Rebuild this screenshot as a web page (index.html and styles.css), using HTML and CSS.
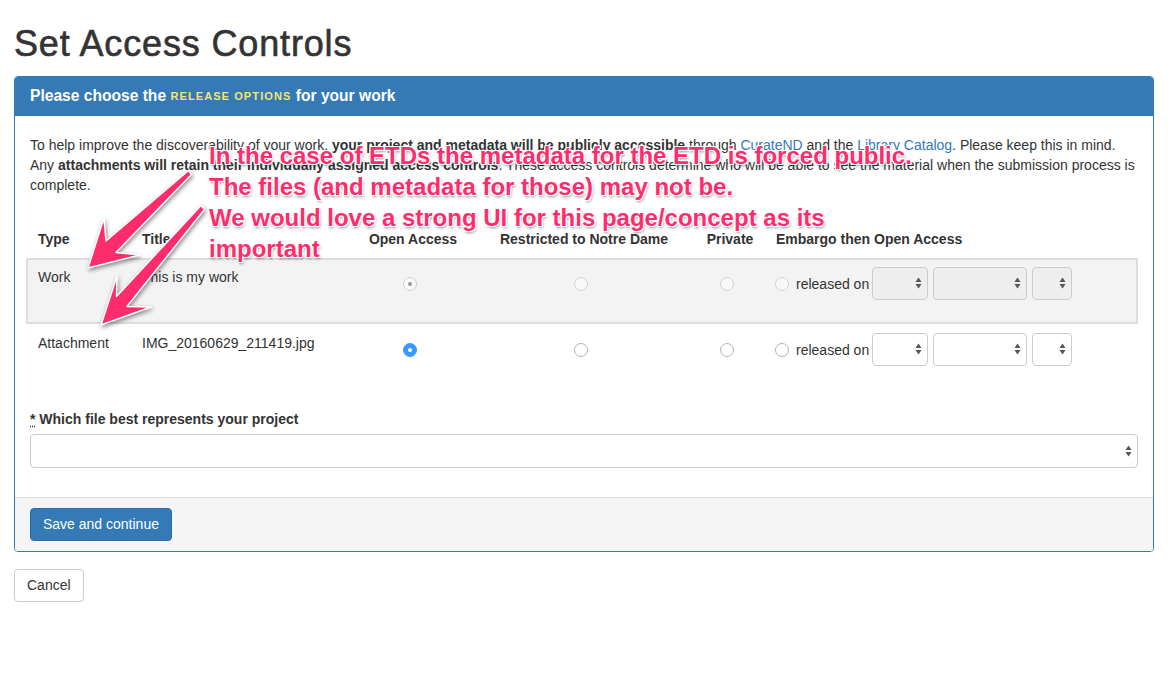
FILE: index.html
```html
<!DOCTYPE html>
<html>
<head>
<meta charset="utf-8">
<title>Set Access Controls</title>
<link rel="stylesheet" href="styles.css">
</head>
<body>
<h1 class="page-title">Set Access Controls</h1>
<div class="panel">
  <div class="panel-heading">Please choose the&nbsp;<span class="release">release options</span>&nbsp;for your work</div>
  <div class="panel-body">
    <p class="intro">To help improve the discoverability of your work, <strong>your project and metadata will be publicly accessible</strong> through <a class="link">CurateND</a> and the <a class="link">Library Catalog</a>. Please keep this in mind. Any <strong>attachments will retain their individually assigned access controls</strong>. These access controls determine who will be able to see the material when the submission process is complete.</p>
    <table class="access">
      <colgroup>
        <col class="w-type"><col class="w-title"><col class="w-open"><col class="w-nd"><col class="w-priv"><col>
      </colgroup>
      <thead>
        <tr>
          <th>Type</th>
          <th>Title</th>
          <th class="c">Open Access</th>
          <th class="c">Restricted to Notre Dame</th>
          <th class="c">Private</th>
          <th>Embargo then Open Access</th>
        </tr>
      </thead>
      <tbody>
        <tr class="work">
          <td>Work</td>
          <td>This is my work</td>
          <td><div class="rbox"><span class="radio disabled checked"></span></div></td>
          <td><div class="rbox"><span class="radio disabled"></span></div></td>
          <td><div class="rbox"><span class="radio disabled"></span></div></td>
          <td class="emb-cell">
            <div class="embargo">
              <span class="radio disabled"></span>
              <span class="rel">released on</span>
              <div class="sel s1 disabled"><svg class="updown" width="7" height="12" viewBox="0 0 7 12"><polygon points="0.5,5 3.5,0.5 6.5,5"/><polygon points="0.5,7 3.5,11.5 6.5,7"/></svg></div>
              <div class="sel s2 disabled"><svg class="updown" width="7" height="12" viewBox="0 0 7 12"><polygon points="0.5,5 3.5,0.5 6.5,5"/><polygon points="0.5,7 3.5,11.5 6.5,7"/></svg></div>
              <div class="sel s3 disabled"><svg class="updown" width="7" height="12" viewBox="0 0 7 12"><polygon points="0.5,5 3.5,0.5 6.5,5"/><polygon points="0.5,7 3.5,11.5 6.5,7"/></svg></div>
            </div>
          </td>
        </tr>
        <tr>
          <td>Attachment</td>
          <td>IMG_20160629_211419.jpg</td>
          <td><div class="rbox"><span class="radio checked"></span></div></td>
          <td><div class="rbox"><span class="radio"></span></div></td>
          <td><div class="rbox"><span class="radio"></span></div></td>
          <td class="emb-cell">
            <div class="embargo">
              <span class="radio"></span>
              <span class="rel">released on</span>
              <div class="sel s1"><svg class="updown" width="7" height="12" viewBox="0 0 7 12"><polygon points="0.5,5 3.5,0.5 6.5,5"/><polygon points="0.5,7 3.5,11.5 6.5,7"/></svg></div>
              <div class="sel s2"><svg class="updown" width="7" height="12" viewBox="0 0 7 12"><polygon points="0.5,5 3.5,0.5 6.5,5"/><polygon points="0.5,7 3.5,11.5 6.5,7"/></svg></div>
              <div class="sel s3"><svg class="updown" width="7" height="12" viewBox="0 0 7 12"><polygon points="0.5,5 3.5,0.5 6.5,5"/><polygon points="0.5,7 3.5,11.5 6.5,7"/></svg></div>
            </div>
          </td>
        </tr>
      </tbody>
    </table>
    <label class="file-label"><abbr class="req" title="required">*</abbr> Which file best represents your project</label>
    <div class="sel full"><svg class="updown" width="7" height="12" viewBox="0 0 7 12"><polygon points="0.5,5 3.5,0.5 6.5,5"/><polygon points="0.5,7 3.5,11.5 6.5,7"/></svg></div>
  </div>
  <div class="panel-footer">
    <span class="btn btn-primary">Save and continue</span>
  </div>
</div>
<span class="btn btn-default">Cancel</span>

<svg class="arrows" width="1170" height="678" viewBox="0 0 1170 678">
  <polygon points="88,268 104,218 106,241 188.5,170.5 191.5,174.5 116,252.5 140,255"/>
  <polygon points="101,325 117,276 116.5,296.5 201,205.5 204.5,209.5 127,306.5 151,307"/>
</svg>
<div class="note">In the case of ETDs the metadata for the ETD is forced public.<br>The files (and metadata for those) may not be.<br>We would love a strong UI for this page/concept as its<br>important</div>
</body>
</html>
```
FILE: styles.css
```css
* { box-sizing: border-box; }
html, body { margin: 0; }
body {
  font-family: "Liberation Sans", Arial, sans-serif;
  font-size: 14px;
  line-height: 20px;
  color: #333;
  background: #fff;
  padding: 0 14px;
  position: relative;
  min-height: 678px;
}
.page-title {
  font-size: 36px;
  line-height: 39.6px;
  font-weight: normal;
  letter-spacing: 0.85px;
  -webkit-text-stroke: 0.6px #333;
  margin: 24px 0 12px;
}
.panel {
  width: 1140px;
  border: 1px solid #337ab7;
  border-radius: 4px;
  margin-bottom: 17px;
}
.panel-heading {
  background: #337ab7;
  color: #fff;
  height: 39px;
  padding: 0 15px;
  display: flex;
  align-items: center;
  font-weight: bold;
  font-size: 15.6px;
  border-radius: 3px 3px 0 0;
}
.release {
  text-transform: uppercase;
  font-size: 11px;
  letter-spacing: 1.1px;
  color: #f3e56f;
}
.panel-body { padding: 19px 15px 15px; }
.intro { margin: 0 0 26px; }
.link { color: #337ab7; text-decoration: none; }

.access {
  border-collapse: separate;
  border-spacing: 0;
  table-layout: fixed;
  width: calc(100% + 4px);
  margin: 0 0 22px -4px;
}
.w-type { width: 108px; }
.w-title { width: 216px; }
.w-open { width: 126px; }
.w-nd { width: 216px; }
.w-priv { width: 76px; }
.access th {
  text-align: left;
  font-weight: bold;
  padding: 8px 8px 9px;
  white-space: nowrap;
}
.access th.c { text-align: center; }
.access td {
  padding: 9px 8px 21px;
  vertical-align: top;
}
.access th:first-child, .access td:first-child { padding-left: 12px; }
.access tr.work td {
  background: #f3f3f3;
  border-top: 2px solid #ddd;
  border-bottom: 2px solid #ddd;
  padding-top: 7px;
  padding-bottom: 22px;
}
.access tr.work td:first-child { border-left: 2px solid #ddd; padding-left: 10px; }
.access tr.work td:last-child { border-right: 2px solid #ddd; }
.access td.emb-cell { padding-left: 7px; padding-right: 0; }

.rbox {
  height: 33px;
  display: flex;
  align-items: center;
  justify-content: center;
}
.rbox .radio { margin-right: 6px; margin-top: 2px; }
.radio {
  width: 14px;
  height: 14px;
  flex: none;
  border-radius: 50%;
  border: 1px solid #b2b2b2;
  background: #fff;
  display: inline-flex;
  align-items: center;
  justify-content: center;
}
.radio.disabled { border-color: #d2d2d2; background: #f8f8f8; }
.radio.checked { background: #3b99fc; border-color: #3b99fc; }
.radio.checked::after {
  content: "";
  width: 4px;
  height: 4px;
  border-radius: 50%;
  background: #fff;
}
.radio.disabled.checked { background: #f8f8f8; border-color: #cfcfcf; }
.radio.disabled.checked::after { background: #999; }

.embargo {
  display: flex;
  align-items: center;
  height: 33px;
  white-space: nowrap;
}
.embargo .radio { margin-top: 1px; }
.rel { margin-left: 7px; margin-top: 1px; }
.sel {
  height: 33px;
  border: 1px solid #ccc;
  border-radius: 4px;
  background: #fff;
  display: flex;
  align-items: center;
  justify-content: flex-end;
  padding-right: 5px;
  flex: none;
  margin-left: 5px;
}
.sel.disabled { background: #eee; }
.s1 { width: 56px; margin-left: 3px; }
.s2 { width: 94px; }
.s3 { width: 40px; }
.updown { fill: #555; display: block; }
.sel.full {
  width: 100%;
  height: 34px;
  margin: 0 0 14px;
  padding-right: 5px;
}
.file-label {
  display: block;
  font-weight: bold;
  margin-bottom: 5px;
}
.req {
  text-decoration: underline dotted;
  text-underline-offset: 2px;
}
.panel-footer {
  background: #f5f5f5;
  border-top: 1px solid #ddd;
  padding: 10px 15px;
  border-radius: 0 0 3px 3px;
}
.btn {
  display: inline-block;
  padding: 6px 12px;
  font-size: 14px;
  line-height: 19px;
  border: 1px solid transparent;
  border-radius: 4px;
}
.btn-primary { background: #337ab7; border-color: #2e6da4; color: #fff; }
.btn-default { background: #fff; border-color: #ccc; color: #333; }

.arrows {
  position: absolute;
  left: 0;
  top: 0;
  pointer-events: none;
  filter: drop-shadow(1px 2px 2px rgba(0,0,0,0.45));
}
.arrows polygon {
  fill: #ff2c6d;
  stroke: #fff;
  stroke-width: 1.5;
  stroke-linejoin: round;
}
.note {
  position: absolute;
  left: 209px;
  top: 140px;
  font-family: "Liberation Sans", Arial, sans-serif;
  font-weight: bold;
  font-size: 24px;
  line-height: 31px;
  color: #ff2c6d;
  white-space: nowrap;
  text-shadow: -1px -1px 0 #fff, 1px -1px 0 #fff, -1px 1px 0 #fff, 1px 1px 0 #fff,
               0 -1px 0 #fff, 0 1px 0 #fff, -1px 0 0 #fff, 1px 0 0 #fff,
               1px 2px 3px rgba(0,0,0,0.45);
}
```
